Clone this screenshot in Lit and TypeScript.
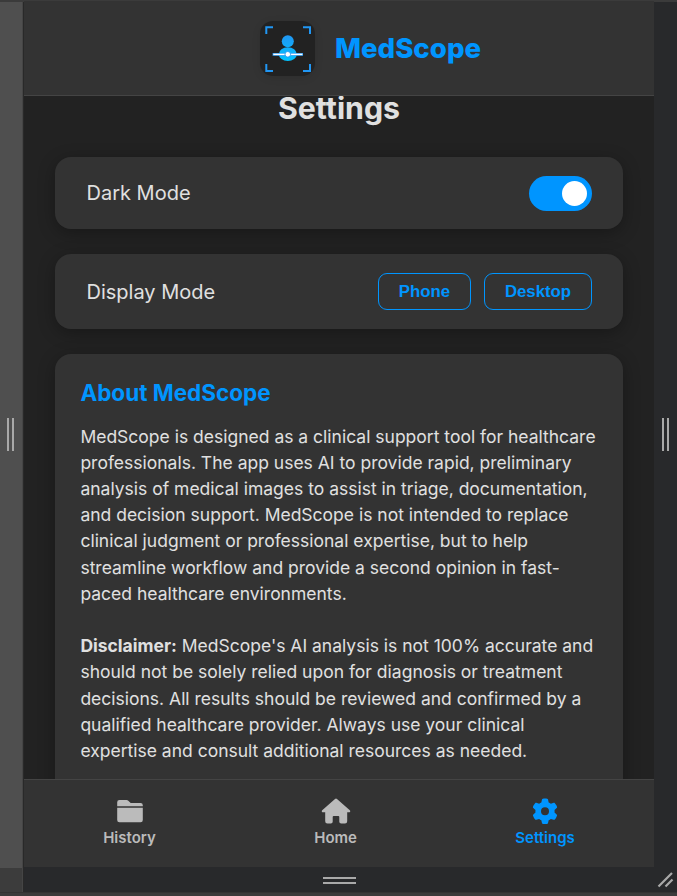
import { LitElement, html, css, svg } from "lit";
import { customElement, property } from "lit/decorators.js";

const icons: Record<string, unknown> = {
  History: svg`<svg width="28" height="26" viewBox="0 0 28 26"><path fill="currentColor" d="M1.2 8.2V4.2Q1.2 2 3.4 2H10.6Q11.6 2 12.3 2.7L14.7 5H24.6Q26.8 5 26.8 7.2V8.2ZM1.2 9.7H26.8V22Q26.8 24.2 24.6 24.2H3.4Q1.2 24.2 1.2 22Z"/></svg>`,
  Home: svg`<svg width="30" height="26" viewBox="0 0 30 26"><path fill="currentColor" d="M14 1Q15 .2 16 1L28.8 12.2Q29.6 13 29.1 13.8Q28.8 14.3 28 14.3H26.2V23.2Q26.2 25.6 24 25.6H20.2Q18.3 25.6 18.3 23.8V18.9Q18.3 17.9 17.3 17.9H12.7Q11.7 17.9 11.7 18.9V23.8Q11.7 25.6 9.8 25.6H6.4Q4.2 25.6 4.2 23.2V14.3H2Q1.2 14.3 .9 13.8Q.4 13 1.2 12.2Z"/></svg>`,
  Settings: svg`<svg width="26" height="26" viewBox="-4 -10 520 520"><path fill="currentColor" d="M495.9 166.6c3.2 8.7 .5 18.4-6.4 24.6l-43.3 39.4c1.1 8.3 1.7 16.8 1.7 25.4s-.6 17.1-1.7 25.4l43.3 39.4c6.9 6.2 9.6 15.9 6.4 24.6c-4.4 11.9-9.7 23.3-15.8 34.3l-4.7 8.1c-6.6 11-14 21.4-22.1 31.2c-5.9 7.2-15.7 9.6-24.5 6.8l-55.7-17.7c-13.4 10.3-28.2 18.9-44 25.4l-12.5 57.1c-2 9.1-9 16.3-18.2 17.8c-13.8 2.3-28 3.5-42.5 3.5s-28.7-1.2-42.5-3.5c-9.2-1.5-16.2-8.7-18.2-17.8l-12.5-57.1c-15.8-6.5-30.6-15.1-44-25.4L83.1 425.9c-8.8 2.8-18.6 .3-24.5-6.8c-8.1-9.8-15.5-20.2-22.1-31.2l-4.7-8.1c-6.1-11-11.4-22.4-15.8-34.3c-3.2-8.7-.5-18.4 6.4-24.6l43.3-39.4C64.6 273.1 64 264.6 64 256s.6-17.1 1.7-25.4L22.4 191.2c-6.9-6.2-9.6-15.9-6.4-24.6c4.4-11.9 9.7-23.3 15.8-34.3l4.7-8.1c6.6-11 14-21.4 22.1-31.2c5.9-7.2 15.7-9.6 24.5-6.8l55.7 17.7c13.4-10.3 28.2-18.9 44-25.4l12.5-57.1c2-9.1 9-16.3 18.2-17.8C227.3 1.2 241.5 0 256 0s28.7 1.2 42.5 3.5c9.2 1.5 16.2 8.7 18.2 17.8l12.5 57.1c15.8 6.5 30.6 15.1 44 25.4l55.7-17.7c8.8-2.8 18.6-.3 24.5 6.8c8.1 9.8 15.5 20.2 22.1 31.2l4.7 8.1c6.1 11 11.4 22.4 15.8 34.3zM256 336a80 80 0 1 0 0-160 80 80 0 1 0 0 160z"/></svg>`,
};

@customElement("app-logo")
class AppLogo extends LitElement {
  static styles = css`
    :host { display: block; width: 55px; height: 55px; border-radius: 13px; background: #222; box-shadow: 0 2px 8px rgba(0, 0, 0, .1); }
    svg { display: block; }
  `;
  render() {
    return html`<svg width="55" height="55" viewBox="0 0 55 55">
      <defs><linearGradient id="g" x1="0" y1="14" x2="0" y2="40" gradientUnits="userSpaceOnUse"><stop offset="0" stop-color="#2196f3"/><stop offset="1" stop-color="#00c3ff"/></linearGradient></defs>
      <path d="M6.3 13V6.3H13M43 6.3H50V13M50 43V50H43M13 50H6.3V43" fill="none" stroke="#2196f3" stroke-width="2"/>
      <circle cx="27.8" cy="20.2" r="6" fill="url(#g)"/>
      <ellipse cx="27.8" cy="33.2" rx="9" ry="6.9" fill="url(#g)"/>
      <path d="M12.6 33.4H43" stroke="#2196f3" stroke-width="2.8"/>
      <path d="M13.3 33.4H42.4" stroke="#fff" stroke-width="1.5"/>
      <circle cx="27.8" cy="33.3" r="2.8" fill="#fff" stroke="#2196f3" stroke-width=".9"/>
    </svg>`;
  }
}

@customElement("nav-item")
class NavItem extends LitElement {
  @property() label = "";
  static styles = css`
    :host { display: flex; flex-direction: column; align-items: center; color: #bbb; font-size: 15px; font-weight: 600; line-height: 18px; }
    :host([active]) { color: #0095ff; }
    svg { display: block; margin-bottom: 5px; }
  `;
  render() {
    return html`${icons[this.label]}<span>${this.label}</span>`;
  }
}

@customElement("app-root")
class AppRoot extends LitElement {
  static styles = css`
    :host { display: grid; box-sizing: border-box; width: 677px; height: 896px; overflow: hidden; grid-template: 2px 866px 24px 4px / 22px 2px 630px 23px; background: #28292b; font-family: Inter, "Liberation Sans", sans-serif; color: #e0e0e0; }
    .top { grid-area: 1 / 1 / 2 / 5; background: #3b3b3b; }
    .base { grid-area: 4 / 1 / 5 / 5; background: #3b3b3b; border-top: 1px solid #333; box-sizing: border-box; }
    .left { grid-area: 2 / 1; background: #4f4f4f; display: flex; align-items: center; padding: 0 0 2px 7px; }
    .corner { grid-area: 3 / 1; background: #3c3c3c; }
    .edge { grid-area: 2 / 2 / 4 / 3; background: linear-gradient(90deg, #454545 50%, #292929 50%); }
    .right { grid-area: 2 / 4; display: flex; align-items: center; padding: 0 0 2px 8px; }
    .bottom { grid-area: 3 / 3; display: flex; align-items: center; justify-content: center; }
    .resize { grid-area: 3 / 4; display: flex; align-items: center; padding: 0 0 2px 3px; }
    .grip { box-sizing: border-box; width: 7px; height: 33px; border: solid #a9a9a9; border-width: 0 2px; }
    .grip.wide { width: 33px; height: 7px; border-width: 2px 0; }
    .screen { grid-area: 1 / 3 / 3 / 4; margin: 1px 0; display: flex; flex-direction: column; background: #222; overflow: hidden; }
    header { flex: none; box-sizing: border-box; height: 95px; display: flex; align-items: center; justify-content: center; gap: 20px; padding-left: 63px; background: #333; border-bottom: 1px solid #444; color: #0095ff; font-size: 27.6px; font-weight: 800; }
    main { flex: 1; min-height: 0; overflow: hidden; padding: 0 31px; }
    h1 { margin: -7px 0 30px; text-align: center; font-size: 30.3px; font-weight: 700; line-height: 38px; }
    .card { box-sizing: border-box; background: #333; border-radius: 16px; box-shadow: 0 4px 17px rgba(0, 0, 0, .3); margin-bottom: 25px; }
    .row { display: flex; align-items: center; justify-content: space-between; padding: 0 31px 0 31.5px; height: 72px; font-size: 20px; }
    .modes { height: 75px; }
    .toggle { box-sizing: border-box; width: 63px; height: 35px; border-radius: 18px; background: #0095ff; padding: 5px 5.5px; display: flex; justify-content: flex-end; }
    .knob { width: 25px; height: 25px; border-radius: 50%; background: #fff; }
    .buttons { display: flex; gap: 13px; }
    button { box-sizing: border-box; height: 37px; width: 93px; padding: 0; border: 1px solid #0095ff; border-radius: 9px; background: none; color: #0095ff; font: 700 16.8px "Liberation Sans", sans-serif; }
    .desktop { width: 108px; }
    .about { padding: 25px 25px 40px 25.4px; height: 500px; }
    h2 { margin: 0 0 16.5px; color: #0095ff; font-size: 22.5px; font-weight: 700; line-height: 28px; }
    p { margin: 0 0 26px; font-size: 17.5px; line-height: 26.24px; white-space: nowrap; }
    nav { flex: none; box-sizing: border-box; height: 88px; display: flex; justify-content: space-around; padding-top: 18px; border-top: 1px solid #444; background: #333; }
  `;
  render() {
    return html`
      <div class="top"></div>
      <div class="left"><div class="grip"></div></div>
      <div class="corner"></div>
      <div class="edge"></div>
      <div class="base"></div>
      <div class="screen">
        <header><app-logo></app-logo><span>MedScope</span></header>
        <main>
          <h1>Settings</h1>
          <section class="card row"><span>Dark Mode</span><div class="toggle"><div class="knob"></div></div></section>
          <section class="card row modes"><span>Display Mode</span><div class="buttons"><button>Phone</button><button class="desktop">Desktop</button></div></section>
          <section class="card about">
            <h2>About MedScope</h2>
            <p>MedScope is designed as a clinical support tool for healthcare<br>professionals. The app uses AI to provide rapid, preliminary<br>analysis of medical images to assist in triage, documentation,<br>and decision support. MedScope is not intended to replace<br>clinical judgment or professional expertise, but to help<br>streamline workflow and provide a second opinion in fast-<br>paced healthcare environments.</p>
            <p><b>Disclaimer:</b> MedScope's AI analysis is not 100% accurate and<br>should not be solely relied upon for diagnosis or treatment<br>decisions. All results should be reviewed and confirmed by a<br>qualified healthcare provider. Always use your clinical<br>expertise and consult additional resources as needed.</p>
          </section>
        </main>
        <nav>
          <nav-item label="History"></nav-item>
          <nav-item label="Home"></nav-item>
          <nav-item label="Settings" active></nav-item>
        </nav>
      </div>
      <div class="right"><div class="grip"></div></div>
      <div class="bottom"><div class="grip wide"></div></div>
      <div class="resize"><svg width="18" height="18" viewBox="0 0 18 18"><path d="M1.5 16.5 15 3M8.5 16.5 15.5 9.5" stroke="#a9a9a9" stroke-width="2.2"/></svg></div>
    `;
  }
}
